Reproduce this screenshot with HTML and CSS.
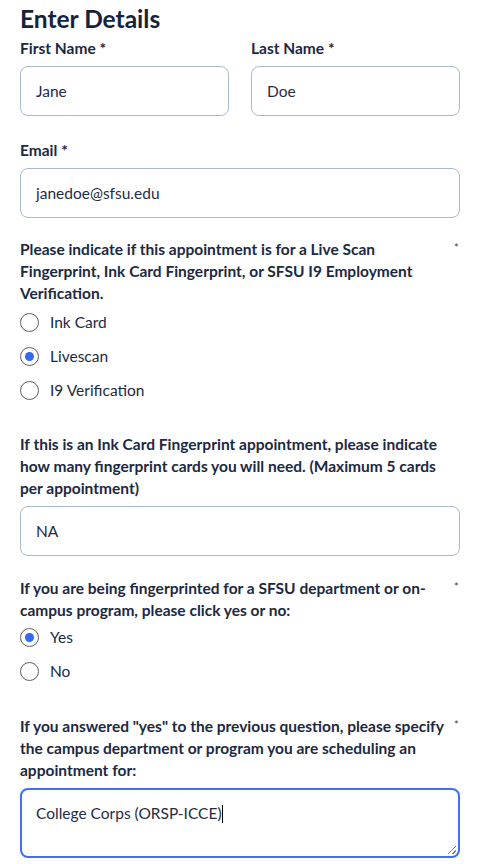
FILE: index.html
```html
<!DOCTYPE html>
<html lang="en">
<head>
<meta charset="utf-8">
<title>Enter Details</title>
<link rel="stylesheet" href="styles.css">
</head>
<body>
<main class="form">
  <h1 class="title">Enter Details</h1>

  <div class="row-2 mb-23">
    <div class="field">
      <label class="label">First Name *</label>
      <div class="input">Jane</div>
    </div>
    <div class="field">
      <label class="label">Last Name *</label>
      <div class="input">Doe</div>
    </div>
  </div>

  <div class="field mb-20">
    <label class="label">Email *</label>
    <div class="input">janedoe@sfsu.edu</div>
  </div>

  <div class="field mb-26">
    <div class="qlabel">
      <span class="qtext">Please indicate if this appointment is for a Live Scan Fingerprint, Ink Card Fingerprint, or SFSU I9 Employment Verification.</span>
      <span class="req">*</span>
    </div>
    <div class="radios">
      <div class="radio"><span class="dot"></span><span>Ink Card</span></div>
      <div class="radio"><span class="dot checked"></span><span>Livescan</span></div>
      <div class="radio"><span class="dot"></span><span>I9 Verification</span></div>
    </div>
  </div>

  <div class="field mb-21">
    <div class="qlabel">
      <span class="qtext">If this is an Ink Card Fingerprint appointment, please indicate how many fingerprint cards you will need. (Maximum 5 cards per appointment)</span>
    </div>
    <div class="input">NA</div>
  </div>

  <div class="field mb-27">
    <div class="qlabel">
      <span class="qtext">If you are being fingerprinted for a SFSU department or on-campus program, please click yes or no:</span>
      <span class="req">*</span>
    </div>
    <div class="radios radios-tight">
      <div class="radio"><span class="dot checked"></span><span>Yes</span></div>
      <div class="radio"><span class="dot"></span><span>No</span></div>
    </div>
  </div>

  <div class="field">
    <div class="qlabel">
      <span class="qtext">If you answered "yes" to the previous question, please specify the campus department or program you are scheduling an appointment for:</span>
      <span class="req">*</span>
    </div>
    <div class="textarea">College Corps (ORSP-ICCE)<span class="caret"></span><span class="grip"></span></div>
  </div>
</main>
</body>
</html>
```

FILE: styles.css
```css
* { box-sizing: border-box; }

html, body {
  margin: 0;
  padding: 0;
  background: #ffffff;
}

body {
  font-family: Lato, "Open Sans", Arial, sans-serif;
  color: #1b2942;
}

.form {
  padding: 4px 20px 0 20px;
}

.title {
  margin: 0 0 3px 0;
  font-size: 24.5px;
  line-height: 30px;
  font-weight: 700;
  color: #15233d;
}

.row-2 {
  display: grid;
  grid-template-columns: 1fr 1fr;
  column-gap: 22px;
}

.mb-20 { margin-bottom: 20px; }
.mb-21 { margin-bottom: 21px; }
.mb-23 { margin-bottom: 23px; }
.mb-26 { margin-bottom: 26px; }
.mb-27 { margin-bottom: 27px; }

.label {
  display: block;
  font-size: 15.5px;
  line-height: 22px;
  font-weight: 700;
  margin-bottom: 7px;
}

.qlabel {
  display: flex;
  align-items: flex-start;
  font-size: 15.5px;
  line-height: 22px;
  font-weight: 700;
  margin-bottom: 7px;
}

.qtext {
  flex: 1;
  padding-right: 6px;
}

.req {
  font-size: 11px;
  line-height: 20px;
  font-weight: 400;
  width: 6px;
  margin-right: 0;
  color: #3a4458;
}

.input {
  height: 50px;
  border: 1px solid #a9b9d2;
  border-radius: 8px;
  padding: 0 15px;
  display: flex;
  align-items: center;
  font-size: 15.5px;
  color: #1f2c44;
}

.radios {
  display: flex;
  flex-direction: column;
  margin-top: -6px;
}

.radios-tight {
  margin-top: -8px;
}

.radio {
  display: flex;
  align-items: center;
  height: 34px;
  font-size: 15.5px;
  gap: 11px;
}

.dot {
  width: 19px;
  height: 19px;
  border: 1px solid #5b5f66;
  border-radius: 50%;
  display: flex;
  align-items: center;
  justify-content: center;
  flex: none;
}

.dot.checked::after {
  content: "";
  width: 9px;
  height: 9px;
  border-radius: 50%;
  background: #2f6bf6;
}

.textarea {
  position: relative;
  height: 70px;
  border: 2px solid #3f6ff5;
  border-radius: 8px;
  padding: 12px 14px;
  font-size: 15.5px;
  line-height: 22px;
  color: #1f2c44;
}

.caret {
  display: inline-block;
  width: 1px;
  height: 18px;
  background: #000;
  vertical-align: -4px;
}

.grip {
  position: absolute;
  right: 2px;
  bottom: 2px;
  width: 8px;
  height: 8px;
  background:
    linear-gradient(135deg, transparent 45%, #888 45%, #888 55%, transparent 55%),
    linear-gradient(135deg, transparent 75%, #888 75%, #888 85%, transparent 85%);
}
```
